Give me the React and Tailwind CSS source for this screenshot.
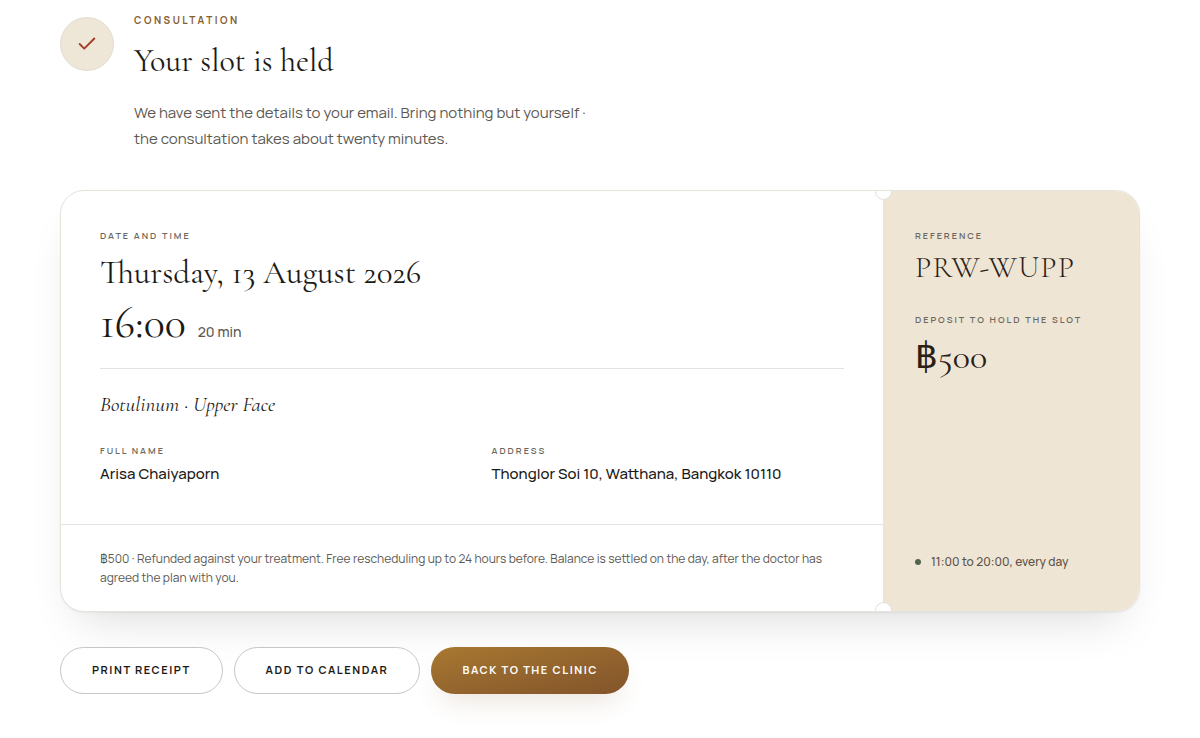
import { Check } from "lucide-react";

const Label = ({ children }) => (
  <p className="text-[9px] leading-[14px] font-semibold uppercase tracking-[0.22em] text-[#6b6860]">
    {children}
  </p>
);

const OutlineButton = ({ children }) => (
  <button
    type="button"
    className="h-[47px] rounded-full border border-[#c6c6c5] bg-white px-[31px] text-[11px] font-bold uppercase tracking-[0.14em] text-[#1c1a17]"
  >
    {children}
  </button>
);

const Header = () => (
  <header className="flex items-start gap-5">
    <div className="mt-1 flex size-[54px] shrink-0 items-center justify-center rounded-full border border-[#e2ddd2] bg-[#eee6d6]">
      <Check size={22} strokeWidth={2} className="text-[#a03c28]" />
    </div>
    <div>
      <p className="text-[10px] leading-[14px] font-bold uppercase tracking-[0.25em] text-[#86602f]">
        Consultation
      </p>
      <h1 className="mt-[14px] font-['Cormorant_Garamond','Cormorant','Liberation_Serif',serif] text-[32px] leading-[40px] text-[#1c1a17]">
        Your slot is held
      </h1>
      <p className="mt-[19px] max-w-[470px] text-[15px] leading-[26px] text-[#5c5953]">
        We have sent the details to your email. Bring nothing but yourself ·
        the consultation takes about twenty minutes.
      </p>
    </div>
  </header>
);

const Ticket = () => (
  <section className="mt-[38px] flex overflow-hidden rounded-3xl border border-[#e4e3dc] bg-white shadow-[0_1px_2px_rgba(0,0,0,0.05),0_24px_48px_-20px_rgba(0,0,0,0.16)]">
    <div className="min-w-0 flex-1">
      <div className="px-[39px] pt-[38px] pb-[38px]">
        <Label>Date and time</Label>
        <h2 className="mt-[10px] font-['Cormorant_Garamond','Cormorant','Liberation_Serif',serif] text-[33px] leading-[40px] text-[#1c1a17]">
          Thursday, 13 August 2026
        </h2>
        <div className="mt-2 flex items-baseline gap-3 border-b border-[#e2e2de] pb-[23px]">
          <span className="font-['Cormorant_Garamond','Cormorant','Liberation_Serif',serif] text-[44px] leading-[44px] text-[#1c1a17]">
            16:00
          </span>
          <span className="text-sm font-medium text-[#5c5953]">20 min</span>
        </div>
        <p className="mt-[22px] font-['Cormorant_Garamond','Cormorant','Liberation_Serif',serif] text-[21px] leading-7 italic text-[#1c1a17]">
          Botulinum · Upper Face
        </p>
        <dl className="mt-[25px] grid grid-cols-2 gap-[39px]">
          <div>
            <dt>
              <Label>Full name</Label>
            </dt>
            <dd className="mt-1 text-[15px] leading-6 font-medium text-[#1c1a17]">
              Arisa Chaiyaporn
            </dd>
          </div>
          <div>
            <dt>
              <Label>Address</Label>
            </dt>
            <dd className="mt-1 text-[15px] leading-6 font-medium text-[#1c1a17]">
              Thonglor Soi 10, Watthana, Bangkok 10110
            </dd>
          </div>
        </dl>
      </div>
      <p className="border-t border-[#e2e2de] px-[39px] py-6 text-xs leading-[19px] text-[#5c5953]">
        ฿500 · Refunded against your treatment. Free rescheduling up to 24 hours
        before. Balance is settled on the day, after the doctor has agreed the
        plan with you.
      </p>
    </div>

    <aside className="relative flex w-[256px] shrink-0 flex-col bg-[#eee5d5] px-8 pt-[38px] pb-[39px]">
      {/* ticket notches */}
      <span className="absolute -top-2 -left-2 size-[17px] rounded-full border border-[#dfe0d6] bg-white" />
      <span className="absolute -bottom-2 -left-2 size-[17px] rounded-full border border-[#dfe0d6] bg-white" />
      <Label>Reference</Label>
      <p className="mt-[7px] font-['Cormorant_Garamond','Cormorant','Liberation_Serif',serif] text-[30px] leading-9 font-light tracking-[0.04em] text-[#2a2016]">
        PRW-WUPP
      </p>
      <div className="mt-[27px]">
        <Label>Deposit to hold the slot</Label>
      </div>
      <p className="mt-[6px] flex items-baseline font-['Cormorant_Garamond','Cormorant','Liberation_Serif',serif] text-4xl leading-[44px] text-[#2a2016]">
        <span className="font-['Noto_Sans',sans-serif] font-medium">฿</span>
        500
      </p>
      <p className="mt-auto flex items-center gap-[10px] text-xs leading-5 font-medium text-[#5c5245]">
        <span className="size-[6px] rounded-full bg-[#52634f]" />
        11:00 to 20:00, every day
      </p>
    </aside>
  </section>
);

const App = () => {
  return (
    <main className="bg-white px-[60px] pt-[13px] pb-11 font-['Manrope','Inter',sans-serif]">
      <Header />
      <Ticket />
      <div className="mt-[35px] flex flex-wrap gap-[11px]">
        <OutlineButton>Print receipt</OutlineButton>
        <OutlineButton>Add to calendar</OutlineButton>
        <button
          type="button"
          className="h-[47px] rounded-full bg-linear-to-br from-[#a87831] to-[#82542a] px-[31px] text-[11px] font-bold uppercase tracking-[0.14em] text-white shadow-[0_14px_28px_-10px_rgba(130,84,42,0.2)]"
        >
          Back to the clinic
        </button>
      </div>
    </main>
  );
};

export default App;
